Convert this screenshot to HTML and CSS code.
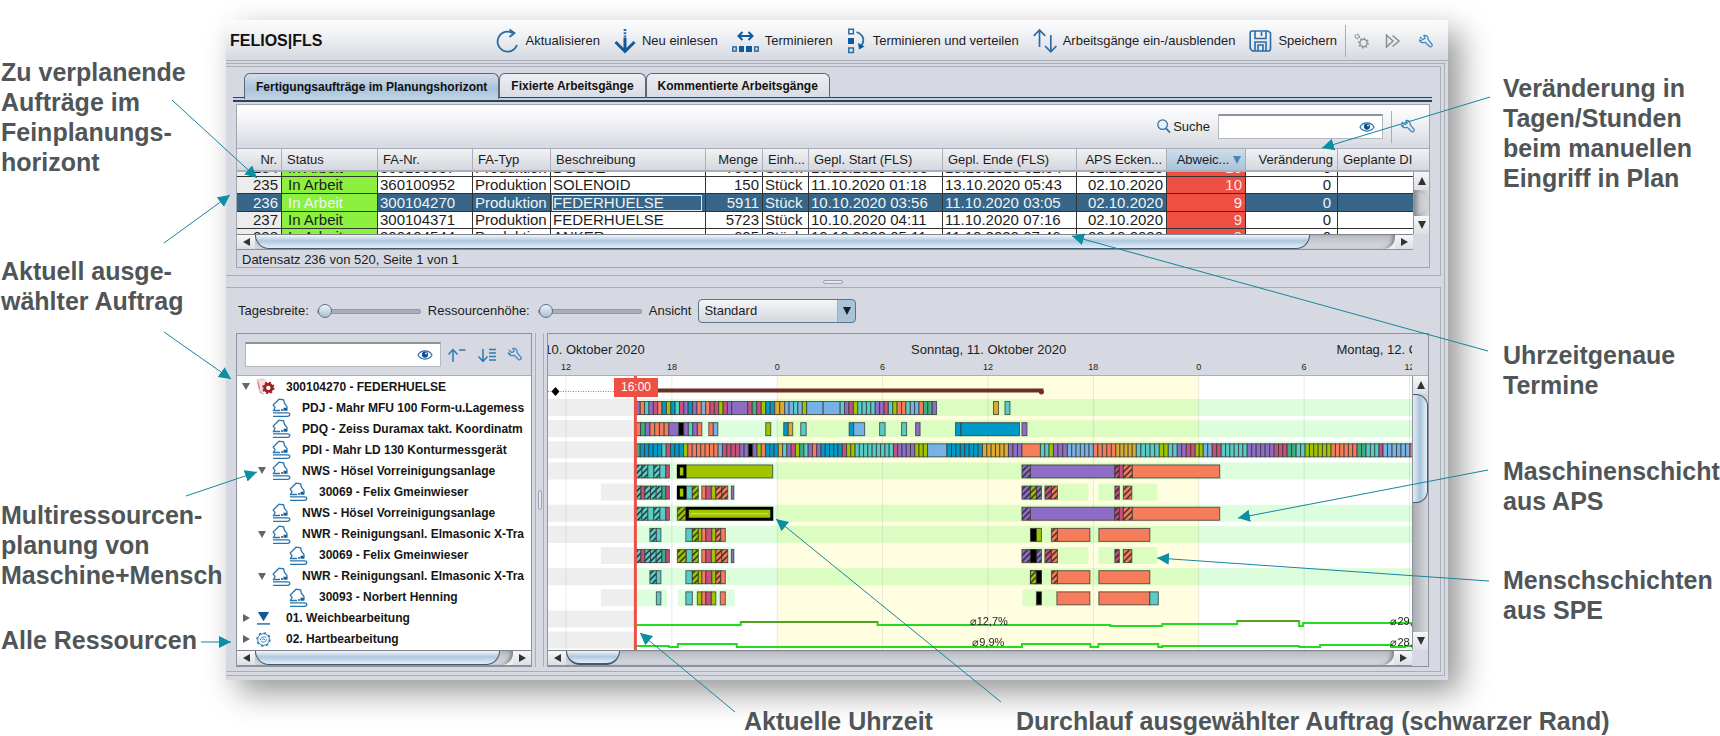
FILE: index.html
```html
<!DOCTYPE html>
<html lang="de">
<head>
<meta charset="utf-8">
<title>FELIOS|FLS</title>
<link rel="stylesheet" href="styles.css">
</head>
<body>
<svg class="defs" aria-hidden="true">
  <symbol id="i-wrench" viewBox="0 0 16 16"><path d="M2 3.2 5.2 6 7.6 4.6 6.2 1.6 C9 .8 11.4 3 10.6 5.8 L15 11.2 C15.8 12.6 14 14.4 12.6 13.6 L7.6 8.8 C5 10 2 8.8 1.4 6.2 L4.2 7.4" fill="none" stroke="currentColor" stroke-width="1.3" stroke-linejoin="round"/></symbol>
  <symbol id="i-eye" viewBox="0 0 16 12"><path d="M1 6 C4 .6 12 .6 15 6 C12 11.4 4 11.4 1 6Z" fill="#fff" stroke="#2a6ca5" stroke-width="1.2"/><circle cx="8" cy="5.6" r="3.1" fill="#0d4f8c"/><circle cx="9" cy="4.6" r="1" fill="#cfe2f2"/></symbol>
  <symbol id="i-machine" viewBox="0 0 19 19"><path d="M8 12.5 H1.5 L3 9.6 1.2 7 7 1.2 11.6 1.8 12.4 5.2 15 8.6 V12.6" fill="none" stroke="#2a74ae" stroke-width="1.3"/><path d="M11.5 9.8 H14.8 V12.8 H11.5Z M9 11.2 H11 V12.8 H9Z" fill="#0f5a9a"/><path d="M1 14.9 H15.5 C18.6 14.9 18.6 18.3 15.5 18.3 H1" fill="none" stroke="#2a74ae" stroke-width="1.2"/></symbol>
  <symbol id="i-order" viewBox="0 0 20 18"><path d="M1 2 8 1 11 4 9 13 4 15Z" fill="#f4dcdc" stroke="#dfb4b4" stroke-width=".8"/><path d="M2 4 4 12" stroke="#c66" stroke-width="1"/><g fill="none" stroke="#9e2226"><circle cx="13" cy="10.4" r="3.8" stroke-width="3"/><circle cx="13" cy="10.4" r="5.6" stroke-width="1.8" stroke-dasharray="2.3 2.1"/></g><path d="M4 15 8 17" stroke="#c77" stroke-width="1"/></symbol>
  <symbol id="i-soft" viewBox="0 0 16 16"><path d="M2 1 H14 L8 11Z" fill="#0f5a9a"/><path d="M1 13.8 H15" stroke="#0f5a9a" stroke-width="1.4"/></symbol>
  <symbol id="i-hard" viewBox="0 0 16 16"><g fill="none" stroke="#2a74ae"><circle cx="8" cy="8" r="6.2" stroke-width="1"/><circle cx="8" cy="8" r="7" stroke-width="1.4" stroke-dasharray="2.6 2.9"/><path d="M4.6 8.6 C5 5 9 4.4 11 6.2 M11.4 7.6 C11 11 7 11.6 5 9.8 M6.6 8.8 8 7 9.6 8.4" stroke-width="1"/></g></symbol>
</svg>

<div class="sheet">
  <aside class="notes notes-left">
    <p class="note order-pool">Zu verplanende<br>Aufträge im<br>Feinplanungs-<br>horizont</p>
    <p class="note current-order">Aktuell ausge-<br>wählter Auftrag</p>
    <p class="note multi">Multiressourcen-<br>planung von<br>Maschine+Mensch</p>
    <p class="note all">Alle Ressourcen</p>
  </aside>

  <div class="center">
  <main class="window">
    <header class="toolbar">
      <h1>FELIOS|FLS</h1>
      <button type="button"><svg width="24" height="26" viewBox="0 0 24 26"><path d="M22 17 A10 10 0 1 1 18 5.2" fill="none" stroke="#2a6ca5" stroke-width="1.8"/><path d="M14.5 1.5 19.5 5 14.5 9" fill="none" stroke="#2a6ca5" stroke-width="1.8"/></svg>Aktualisieren</button>
      <button type="button"><svg width="22" height="26" viewBox="0 0 22 26"><path d="M11 1 V10" stroke="#2a6ca5" stroke-width="2.6" stroke-dasharray="2 1.2"/><path d="M11 10 V23 M1.5 14 11 23.5 20.5 14" fill="none" stroke="#0f5a9a" stroke-width="3"/></svg>Neu einlesen</button>
      <button type="button"><svg width="27" height="26" viewBox="0 0 27 26"><path d="M6.5 8 H20.5 M10.5 4 6.5 8 10.5 12 M16.5 4 20.5 8 16.5 12" fill="none" stroke="#0f5a9a" stroke-width="2"/><path d="M.8 18.8 H4.2 V23.2 H.8Z M22.8 18.8 H26.2 V23.2 H22.8Z" fill="none" stroke="#0f5a9a" stroke-width="1.3"/><path d="M7 18 H12 V24 H7Z M14 18 H20 V24 H14Z" fill="#0f5a9a"/></svg>Terminieren</button>
      <button type="button"><svg width="20" height="26" viewBox="0 0 20 26"><path d="M1.8 1.2 H6.4 V5.8 H1.8Z M1.8 20 H6.4 V24.6 H1.8Z" fill="none" stroke="#2a6ca5" stroke-width="1.5"/><path d="M1 10 H7 V16 H1Z" fill="#0f5a9a"/><path d="M9.5 4 C17.5 7 18 13 13.5 19" fill="none" stroke="#2a6ca5" stroke-width="1.8"/><path d="M11 15 12 21.5 17.5 18.5Z" fill="#0f5a9a"/></svg>Terminieren und verteilen</button>
      <button type="button"><svg width="24" height="26" viewBox="0 0 24 26"><path d="M6.5 19 V2 M.8 7.8 6.5 2 12.2 7.8 M17.8 7 V23.5 M12 18 17.8 23.8 23.4 18" fill="none" stroke="#2a6ca5" stroke-width="1.7"/></svg>Arbeitsgänge ein-/ausblenden</button>
      <button type="button"><svg width="23" height="24" viewBox="0 0 23 24"><path d="M3 2 H19 L21.5 4 V19.5 Q21.5 22 19.5 22 H3.5 L1.2 19.5 V4 Q1.2 2 3 2Z M6 2 V9.5 H17 V2 M12.5 3 V7 M6 22 V13 H17 V22 M9 22 V16 H14 V22" fill="none" stroke="#2a6ca5" stroke-width="1.6"/></svg>Speichern</button>
      <span class="rule"></span>
      <button type="button" class="mini" aria-label="Prozesse"><svg width="15" height="16" viewBox="0 0 15 16" fill="none" stroke="#8a8d93"><circle cx="9.5" cy="10" r="3.6" stroke-width="1.3"/><circle cx="9.5" cy="10" r="4.8" stroke-width="1.3" stroke-dasharray="1.6 2.1"/><circle cx="3.2" cy="3.4" r="2" stroke-width="1.6" stroke-dasharray="1.3 .8"/></svg></button>
      <button type="button" class="mini" aria-label="Weiter"><svg width="16" height="14" viewBox="0 0 16 14" fill="none" stroke="#8a8d93" stroke-width="1.5"><path d="M1.5 1 V13 L8 7Z M7.5 1.5 14 7 7.5 12.5"/></svg></button>
      <button type="button" class="mini blue" aria-label="Einstellungen"><svg width="15" height="15"><use href="#i-wrench"/></svg></button>
    </header>

    <div class="frame">
      <section class="pane pane-orders">
        <nav class="tabs">
          <button type="button" class="tab active">Fertigungsaufträge im Planungshorizont</button>
          <button type="button" class="tab">Fixierte Arbeitsgänge</button>
          <button type="button" class="tab">Kommentierte Arbeitsgänge</button>
        </nav>
        <div class="orders">
          <div class="searchbar">
            <label for="suche"><svg width="14" height="15" viewBox="0 0 14 15" fill="none" stroke="#2a74ae"><circle cx="5.6" cy="5.6" r="4.8" stroke-width="1.2"/><path d="M9 9.4 13 13.6" stroke-width="1.8"/></svg>Suche</label>
            <span class="field"><input id="suche" type="text"><svg width="16" height="12"><use href="#i-eye"/></svg></span>
            <span class="rule"></span>
            <button type="button" class="mini blue" aria-label="Tabelle einstellen"><svg width="15" height="15"><use href="#i-wrench"/></svg></button>
          </div>
          <div class="grid">
            <div class="viewport" id="orders-view">
              <table>
                <colgroup><col class="c45"><col class="c96"><col class="c95"><col class="c78"><col class="c155"><col class="c57"><col class="c46"><col class="c134"><col class="c134"><col class="c90"><col class="c79"><col class="c92"><col></colgroup>
                <thead><tr><th class="r">Nr.</th><th>Status</th><th>FA-Nr.</th><th>FA-Typ</th><th>Beschreibung</th><th class="r">Menge</th><th>Einh...</th><th>Gepl. Start (FLS)</th><th>Gepl. Ende (FLS)</th><th class="r">APS Ecken...</th><th class="r sorted">Abweic... <i class="sort"></i></th><th class="r">Veränderung</th><th>Geplante DI</th></tr></thead>
                <tbody>
                  <tr><td>234</td><td>In Arbeit</td><td>360100087</td><td>Produktion</td><td>DOESE</td><td>7000</td><td>Stück</td><td>10.10.2020 03:33</td><td>13.10.2020 02:54</td><td>02.10.2020</td><td>10</td><td>0</td><td></td></tr>
                  <tr><td>235</td><td>In Arbeit</td><td>360100952</td><td>Produktion</td><td>SOLENOID</td><td>150</td><td>Stück</td><td>11.10.2020 01:18</td><td>13.10.2020 05:43</td><td>02.10.2020</td><td>10</td><td>0</td><td></td></tr>
                  <tr class="current"><td>236</td><td>In Arbeit</td><td>300104270</td><td>Produktion</td><td><span class="focus">FEDERHUELSE</span></td><td>5911</td><td>Stück</td><td>10.10.2020 03:56</td><td>11.10.2020 03:05</td><td>02.10.2020</td><td>9</td><td>0</td><td></td></tr>
                  <tr><td>237</td><td>In Arbeit</td><td>300104371</td><td>Produktion</td><td>FEDERHUELSE</td><td>5723</td><td>Stück</td><td>10.10.2020 04:11</td><td>11.10.2020 07:16</td><td>02.10.2020</td><td>9</td><td>0</td><td></td></tr>
                  <tr><td>238</td><td>In Arbeit</td><td>300104544</td><td>Produktion</td><td>ANKER</td><td>605</td><td>Stück</td><td>10.10.2020 05:11</td><td>11.10.2020 07:46</td><td>02.10.2020</td><td>9</td><td>0</td><td></td></tr>
                </tbody>
              </table>
            </div>
            <div class="vside">
              <div class="vhead"></div>
              <div class="vbar"><span class="arrow up"></span><span class="vthumb grey"></span><span class="arrow down"></span></div>
            </div>
            <div class="hbar"><span class="arrow left"></span><div class="htrack"><span class="hthumb wide"></span></div><span class="arrow right"></span></div>
            <div class="corner"></div>
          </div>
          <p class="status">Datensatz 236 von 520, Seite 1 von 1</p>
        </div>
      </section>

      <div class="split-h"><span></span></div>

      <section class="pane pane-plan">
        <div class="controls">
          <label for="tag">Tagesbreite:</label><input id="tag" type="range" min="0" max="100" value="0">
          <label for="res">Ressourcenhöhe:</label><input id="res" type="range" min="0" max="100" value="0">
          <label for="ansicht">Ansicht</label><span class="choice"><select id="ansicht"><option>Standard</option></select></span>
        </div>
        <div class="plan">
          <div class="tree-panel">
            <div class="tree-tools">
              <span class="field"><input type="text" aria-label="Ressource suchen"><svg width="16" height="12"><use href="#i-eye"/></svg></span>
              <button type="button" class="mini" aria-label="Zuklappen"><svg width="20" height="16" viewBox="0 0 20 16" fill="none" stroke="#2f7ab5" stroke-width="1.5"><path d="M6 15 V3 M1.5 7.5 6 2.5 10.5 7.5 M12 3 H18.5"/></svg></button>
              <button type="button" class="mini" aria-label="Aufklappen"><svg width="20" height="16" viewBox="0 0 20 16" fill="none" stroke="#2f7ab5" stroke-width="1.5"><path d="M6 2 V14 M1.5 9.5 6 14.5 10.5 9.5 M12 2.5 H19 M12 6 H19 M12 9.5 H19 M12 13 H19"/></svg></button>
              <button type="button" class="mini blue" aria-label="Baum einstellen"><svg width="15" height="15"><use href="#i-wrench"/></svg></button>
            </div>
            <ul class="tree">
              <li class="l0"><i class="open"></i><svg class="ic"><use href="#i-order"/></svg>300104270 - FEDERHUELSE</li>
              <li class="l1"><i></i><svg class="ic"><use href="#i-machine"/></svg>PDJ - Mahr MFU 100 Form-u.Lagemess</li>
              <li class="l1"><i></i><svg class="ic"><use href="#i-machine"/></svg>PDQ - Zeiss Duramax takt. Koordinatm</li>
              <li class="l1"><i></i><svg class="ic"><use href="#i-machine"/></svg>PDI - Mahr LD 130 Konturmessgerät</li>
              <li class="l1"><i class="open"></i><svg class="ic"><use href="#i-machine"/></svg>NWS - Hösel Vorreinigungsanlage</li>
              <li class="l2"><i></i><svg class="ic"><use href="#i-machine"/></svg>30069 - Felix Gmeinwieser</li>
              <li class="l1"><i></i><svg class="ic"><use href="#i-machine"/></svg>NWS - Hösel Vorreinigungsanlage</li>
              <li class="l1"><i class="open"></i><svg class="ic"><use href="#i-machine"/></svg>NWR - Reinigungsanl. Elmasonic X-Tra</li>
              <li class="l2"><i></i><svg class="ic"><use href="#i-machine"/></svg>30069 - Felix Gmeinwieser</li>
              <li class="l1"><i class="open"></i><svg class="ic"><use href="#i-machine"/></svg>NWR - Reinigungsanl. Elmasonic X-Tra</li>
              <li class="l2"><i></i><svg class="ic"><use href="#i-machine"/></svg>30093 - Norbert Henning</li>
              <li class="l0"><i class="shut"></i><svg class="ic small"><use href="#i-soft"/></svg>01. Weichbearbeitung</li>
              <li class="l0"><i class="shut"></i><svg class="ic small"><use href="#i-hard"/></svg>02. Hartbearbeitung</li>
            </ul>
            <div class="hbar"><span class="arrow left"></span><div class="htrack"><span class="hthumb tree-thumb"></span></div><span class="arrow right"></span></div>
          </div>

          <div class="split-v"><span></span></div>

          <div class="gantt-panel">
            <div class="scale">
              <div class="days"><span class="day d1">Samstag, 10. Oktober 2020</span><span class="day d2">Sonntag, 11. Oktober 2020</span><span class="day d3">Montag, 12. Oktober 2020</span></div>
              <div class="hours" id="hours"></div>
            </div>
            <div class="scale-end"></div>
            <div class="chart">
              <svg id="gantt" viewBox="0 0 865 274" preserveAspectRatio="none" role="img" aria-label="Plantafel"></svg>
              <span class="now">16:00</span>
              <span class="load w1">⌀12,7%</span><span class="load w2">⌀9,9%</span>
              <span class="load w3">⌀29,1%</span><span class="load w4">⌀28,4%</span>
            </div>
            <div class="vbar"><span class="arrow up"></span><span class="vthumb"></span><span class="arrow down"></span></div>
            <div class="hbar"><span class="arrow left"></span><div class="htrack"><span class="hthumb short"></span></div><span class="arrow right"></span></div>
            <div class="corner"></div>
          </div>
        </div>
      </section>
    </div>
  </main>
  <div class="captions"><p class="note">Aktuelle Uhrzeit</p><p class="note">Durchlauf ausgewählter Auftrag (schwarzer Rand)</p></div>
  </div>

  <aside class="notes notes-right">
    <p class="note change">Veränderung in<br>Tagen/Stunden<br>beim manuellen<br>Eingriff in Plan</p>
    <p class="note dates">Uhrzeitgenaue<br>Termine</p>
    <p class="note machine">Maschinenschicht<br>aus APS</p>
    <p class="note people">Menschschichten<br>aus SPE</p>
  </aside>

  <svg class="arrows" viewBox="0 0 1720 736" aria-hidden="true">
    <defs><marker id="tip" markerUnits="userSpaceOnUse" markerWidth="14" markerHeight="14" refX="12" refY="6" orient="auto"><path d="M0 0 12 6 0 12Z" fill="#0a8fa3"/></marker></defs>
    <g stroke="#17859b" stroke-width="1" marker-end="url(#tip)">
      <path d="M172 100 257 178"/><path d="M164 243 230 195"/><path d="M164 332 231 379"/><path d="M186 496 257 472"/><path d="M201 642 231 642"/>
      <path d="M1490 97 1322 148"/><path d="M1488 351 1072 236"/><path d="M1488 470 1238 518"/><path d="M1489 581 1157 558"/><path d="M1001 702 776 519"/><path d="M735 712 640 633"/>
    </g>
  </svg>
</div>
<script src="gantt.js"></script>
</body>
</html>
```

FILE: styles.css
```css
* { box-sizing: border-box; }
body { margin: 0; background: #fff; color: #1c1c1e; font: 13px/16px "Liberation Sans", Arial, sans-serif; }
h1, p, ul { margin: 0; padding: 0; }
button, input, select { font: inherit; color: inherit; }
button { border: 0; background: none; padding: 0; }
svg { display: block; flex: none; }
.defs { position: absolute; width: 0; height: 0; }

.sheet { position: relative; display: grid; grid-template-columns: 226px minmax(0, 1fr) 272px; overflow: hidden; }
.note { font-size: 25px; line-height: 30px; font-weight: 700; color: #505558; white-space: nowrap; }
.notes { position: relative; z-index: 1; }
.notes-left { padding-left: 1px; }
.notes-right { padding-left: 55px; }
.order-pool { margin-top: 57px; }
.current-order { margin-top: 79px; }
.multi { margin-top: 184px; }
.all { margin-top: 35px; }
.change { margin-top: 73px; }
.dates { margin-top: 147px; }
.machine { margin-top: 56px; }
.people { margin-top: 49px; }
.captions { position: relative; display: flex; gap: 83px; padding: 28px 0 0 518px; }
.captions .note { line-height: 27px; }
.arrows { position: absolute; top: 0; left: 0; width: 100%; height: auto; z-index: 2; pointer-events: none; }

.window { margin-top: 20px; padding-bottom: 4px; background: #d6d9e1; box-shadow: 12px 12px 30px rgba(0, 0, 0, .42); }
.toolbar { display: flex; align-items: center; gap: 14px; height: 41px; padding: 2px 14px 0 4px; background: linear-gradient(#fbfbfb, #f3f4f6 30%, #d6d9e1); border-bottom: 1px solid #a9aeb9; }
.toolbar h1 { font-size: 16px; line-height: 20px; margin-right: auto; color: #111; }
.toolbar button { display: flex; align-items: center; gap: 6px; white-space: nowrap; }
.toolbar .mini { width: 18px; justify-content: center; }
.toolbar .rule { height: 32px; margin: 0 -8px 0 -6px; }
.blue { color: #3f86c0; }
.rule { width: 1px; background: #a9aeb9; }

.frame { margin: 2px 3px 0 0; padding: 2px 3px 3px 0; border: 1px solid #a9aeb9; border-left: 0; }
.pane { border: 1px solid #a9aeb9; border-left: 0; }
.pane-orders { padding: 6px 8px 7px 7px; }

.tabs { display: flex; height: 29px; padding-left: 11px; background: linear-gradient(transparent 24px, #2f4257 24px, #2f4257 25px, #bfd3e6 25px, #bfd3e6 27px, #2f4257 27px); }
.tab { height: 25px; padding: 0 11px; font-size: 12px; font-weight: 700; color: #111; border: 1px solid #5d6877; border-bottom-color: #2f4257; border-radius: 6px 6px 0 0; background: linear-gradient(#eceef2, #d9dce3); white-space: nowrap; }
.tab.active { height: 26px; border-bottom: 0; background: linear-gradient(#d3dee9, #a9c3da 60%, #bfd3e6); }

.orders { margin: 2px 2px 0 3px; border: 1px solid #a0a5b0; }
.searchbar { display: flex; align-items: center; justify-content: flex-end; gap: 8px; height: 43px; padding: 0 14px; background: linear-gradient(#fff, #f1f2f4 40%, #d6d9e1); }
.searchbar label { display: flex; align-items: center; gap: 2px; }
.searchbar .field { width: 165px; }
.searchbar .rule { height: 32px; }
.field { display: flex; align-items: center; height: 25px; padding-right: 7px; background: #fff; border: 1px solid #b4b8c1; border-top: 2px solid #8d929c; }
.field input { flex: 1; min-width: 0; height: 100%; border: 0; background: none; padding: 0 4px; }

.grid { display: grid; grid-template-columns: minmax(0, 1fr) 16px; }
.viewport { height: 86px; overflow: hidden; background: #fff; }
.vside { display: grid; grid-template-rows: 24px 1fr; }
.vhead, th { background: linear-gradient(#f1f2f4, #d4d7de); border-top: 1px solid #a9aeb9; border-bottom: 2px solid #a9aeb9; }
table { width: 100%; table-layout: fixed; border-spacing: 0; }
th { position: sticky; top: 0; height: 24px; padding: 0 4px 0 5px; font-weight: 400; text-align: left; white-space: nowrap; overflow: hidden; border-right: 1px solid #a9aeb9; }
th:last-child { border-right: 0; padding-right: 0; }
th.r { text-align: right; }
th.sorted { background: linear-gradient(#cfdde9, #a9c3da); }
.sort { display: inline-block; border: 4px solid transparent; border-top: 8px solid #4a84b8; border-bottom: 0; }
td { height: 17px; padding: 0 3px 0 2px; font-size: 15px; line-height: 16px; white-space: nowrap; overflow: hidden; border-right: 1px solid #333; border-bottom: 1px solid #333; }
td:last-child { border-right: 0; }
td:nth-child(1), td:nth-child(6), td:nth-child(10), td:nth-child(11) { text-align: right; }
td:nth-child(12) { text-align: right; padding-right: 6px; }
td:nth-child(1) { background: #ececec; }
td:nth-child(2) { background: #8cf03e; padding-left: 6px; }
td:nth-child(11) { background: #ee5044; color: #fbe3e0; }
.current td { background: #376689; color: #eef4f8; }
.current td:nth-child(2) { background: #8cf03e; }
.current td:nth-child(11) { background: #ee5044; }
.focus { display: block; line-height: 14px; margin: 1px 0 0 -1px; border: 1px solid #dfe8ef; }
.c45 { width: 45px; } .c96 { width: 96px; } .c95 { width: 95px; } .c78 { width: 78px; } .c155 { width: 155px; } .c57 { width: 57px; } .c46 { width: 46px; } .c134 { width: 134px; } .c90 { width: 90px; } .c79 { width: 79px; } .c92 { width: 92px; }
.status { padding: 3px 0 0 5px; height: 17px; line-height: 14px; }

.hbar { display: flex; height: 16px; border-top: 1px solid #7d828c; border-bottom: 1px solid #8d929c; background: #eceef1; }
.htrack { flex: 1; background: linear-gradient(#b9bcc3, #d8dae0); border-radius: 0 0 12px 0; box-shadow: inset -4px 0 4px -2px #777; }
.hthumb { display: block; height: 14px; border: 1px solid #43586e; border-top: 0; border-radius: 0 0 14px 14px; background: linear-gradient(#f2f6fa, #b0c8de 45%, #e0f0fa); }
.hthumb.wide { width: 92.5%; }
.hthumb.tree-thumb { width: 95%; }
.hthumb.short { width: 54px; border-bottom-width: 2px; }
.arrow { display: flex; align-items: center; justify-content: center; flex: none; width: 18px; height: 100%; background: linear-gradient(#f6f7f8, #dcdfe4); }
.arrow::before { content: ""; border: 4px solid transparent; }
.arrow.left::before { border-right: 7px solid #333; border-left: 0; }
.arrow.right::before { border-left: 7px solid #333; border-right: 0; }
.arrow.up::before { border-bottom: 8px solid #333; border-top: 0; }
.arrow.down::before { border-top: 8px solid #333; border-bottom: 0; }
.arrow.up, .arrow.down { width: 100%; height: 18px; }
.vbar { display: flex; flex-direction: column; justify-content: space-between; background: linear-gradient(90deg, #a9acb1, #d8dade); border-left: 1px solid #8d929c; }
.vthumb { flex: 0 0 109px; margin-bottom: auto; border: 1px solid #43586e; border-left: 0; border-radius: 0 12px 12px 0; background: linear-gradient(90deg, #e4eef6, #a9c3da 50%, #e4f2fb); }
.vthumb.grey { flex: 0 0 26px; margin-bottom: 0; border: 0; background: linear-gradient(90deg, #bfc1c6, #d6d8dc); box-shadow: inset 3px 0 4px #8a8a8a; }
.corner { background: #d6d9e1; }

.split-h { display: flex; justify-content: center; align-items: center; height: 11px; padding-right: 2px; }
.split-h span { width: 20px; height: 4px; border: 1px solid #9ba1ad; border-radius: 3px; background: #e6e8ec; }

.pane-plan { padding: 11px 11px 4px 10px; }
.controls { display: flex; align-items: center; height: 24px; padding-left: 2px; }
.controls input[type=range] { appearance: none; width: 104px; height: 14px; margin: 0 7px 0 8px; background: none; }
.controls input[type=range]::-webkit-slider-runnable-track { height: 5px; border: 1px solid #9299a6; border-radius: 2px; background: #aab0bb; }
.controls input[type=range]::-webkit-slider-thumb { appearance: none; width: 14px; height: 14px; margin-top: -6px; border: 1px solid #5a7186; border-radius: 50%; background: linear-gradient(#eef3f7, #a9bfd2); }
.choice { position: relative; margin-left: 7px; }
.choice::after { content: ""; position: absolute; right: 5px; top: 8px; border: 4px solid transparent; border-top: 8px solid #1c1c1e; border-bottom: 0; pointer-events: none; }
select { appearance: none; display: block; width: 158px; height: 24px; padding: 0 5px; color: #1c1c1e; border: 1px solid #5d7388; border-radius: 4px; background: linear-gradient(90deg, transparent 138px, #8ba4ba 138px, #a9c3da 139px), linear-gradient(#f4f5f7, #d4d7de); }

.plan { display: grid; grid-template-columns: 296px 15px minmax(0, 1fr); margin-top: 10px; }
.tree-panel { display: flex; flex-direction: column; border: 1px solid #8d929c; min-width: 0; }
.tree-tools { display: flex; align-items: center; gap: 10px; height: 42px; padding: 0 8px; border-bottom: 1px solid #a9aeb9; }
.tree-tools .field { width: 196px; margin-right: -4px; }
.tree-tools .mini { flex: none; }
.tree { flex: 1; display: grid; grid-auto-rows: 1fr; min-height: 274px; list-style: none; background: #fff; overflow: hidden; }
.tree li { display: flex; align-items: center; font-size: 12px; font-weight: 700; white-space: nowrap; color: #161616; }
.tree i { flex: none; width: 12px; margin-right: 4px; display: flex; justify-content: center; }
.tree .open::before { content: ""; border: 4px solid transparent; border-top: 7px solid #666; border-bottom: 0; }
.tree .shut::before { content: ""; border: 4px solid transparent; border-left: 7px solid #666; border-right: 0; }
.ic { width: 19px; height: 19px; margin-right: 11px; }
.ic.small { width: 15px; height: 15px; margin-right: 15px; }
.l0 { padding-left: 3px; }
.l1 { padding-left: 19px; }
.l2 { padding-left: 36px; }

.split-v { display: flex; align-items: center; justify-content: center; margin: 0 3px; border: solid #a9aeb9; border-width: 0 1px; }
.split-v span { width: 4px; height: 20px; border: 1px solid #9ba1ad; border-radius: 3px; background: #e6e8ec; }

.gantt-panel { display: grid; grid-template-columns: minmax(0, 1fr) 16px; grid-template-rows: 42px minmax(274px, 1fr) 16px; border: 1px solid #8d929c; min-width: 0; }
.scale, .scale-end { border-bottom: 1px solid #a9aeb9; }
.scale { display: flex; flex-direction: column; justify-content: flex-end; overflow: hidden; }
.days, .hours { position: relative; height: 20px; }
.hours { height: 13px; }
.day, .hours span { position: absolute; white-space: nowrap; transform: translateX(-50%); }
.hours span { font-size: 9px; line-height: 10px; }
.d1 { left: 2%; } .d2 { left: 51%; } .d3 { left: 100%; }
.chart { position: relative; overflow: hidden; background: #fff; }
.chart svg { position: absolute; inset: 0; width: 100%; height: 100%; }
.now { position: absolute; left: 88px; top: 2px; width: 44px; margin-left: -22px; background: #ee5044; color: #fff; font-size: 12px; line-height: 19px; text-align: center; }
.load { position: absolute; font-size: 11px; line-height: 12px; color: #222; white-space: nowrap; }
.w1 { left: 48.8%; bottom: 23px; } .w2 { left: 49.1%; bottom: 2px; }
.w3 { left: 97.5%; bottom: 23px; } .w4 { left: 97.5%; bottom: 2px; }
```

FILE: gantt.js
```js
const colors = { v: '#8f6dc6', o: '#f67d5b', t: '#58ccc6', b: '#009ac8', l: '#77b1e5', g: '#a1c400', e: '#3fae84', m: '#c7507f', y: '#dcab32', k: '#000' };
const ROW = 21.15, TOP = 25;
let out = '<defs>';
for (const c in colors) out += `<pattern id="h${c}" width="6" height="6" patternUnits="userSpaceOnUse"><rect width="6" height="6" fill="${colors[c]}"/><path d="M-1 7 7-1M-4 4 4-4M2 10 10 2" stroke="#222" stroke-width="1.3"/></pattern>`;
out += '</defs><rect x="229.5" width="422" height="274" fill="#fffee0"/>';

const band = (row, a, b, fill) => { out += `<rect x="${a}" y="${TOP - 2 + ROW * (row - 1)}" width="${b - a}" height="17" fill="${fill}" style="mix-blend-mode:multiply"/>`; };
const GREY = '#eeeeee', GREEN = '#dcfedd';
[1, 2, 3, 4, 6, 7, 9, 11, 12].forEach(r => band(r, 0, 88, GREY));
[1, 2, 3, 4, 6, 7, 9].forEach(r => band(r, 88, 865, GREEN));
[5, 8, 10].forEach(r => { band(r, 53, 88, GREY); band(r, 88, 119, GREEN); band(r, 130, 187, GREEN); });
[5, 8].forEach(r => { band(r, 475, 541, GREEN); band(r, 551, 610, GREEN); });
band(10, 475, 510, GREEN);
[18, 124, 229.5, 335, 440.5, 546, 651.5, 757, 862.5].forEach(x => { out += `<path d="M${x} 0V274" stroke="#8888a0" stroke-opacity=".2"/>`; });

/* Splits the span a..b evenly over the letters; capital letters are hatched. */
const seq = (row, a, b, s) => {
  const w = (b - a) / s.length, y = TOP + .5 + ROW * (row - 1);
  [...s].forEach((c, i) => {
    const k = c.toLowerCase();
    out += `<rect x="${a + i * w}" y="${y}" width="${w}" height="13" fill="${c === k ? colors[k] : `url(#h${k})`}" stroke="#333" stroke-opacity=".75"/>`;
  });
};
const picked = (row, a, b) => {
  const y = TOP + ROW * (row - 1);
  out += `<rect x="${a + 1.5}" y="${y + 1.5}" width="${b - a - 3}" height="11" fill="#a1c400" stroke="#000" stroke-width="3"/><path d="M${a + 5} ${y + 7}H${b - 5}" stroke="#d8e85a"/>`;
};

/* Each list holds start, end and the colour letters of one run of operations. */
const plan = {
  1: [[88, 184, 'votvmobgbtmvbvolommgmv'], [184, 200, 'v'], [200, 227, 'memgbb'], [227, 237, 'yy'], [237, 259, 'lltlg'], [259, 275.5, 'l'], [275.5, 292.5, 'l'], [292.5, 389, 'tvmgttttvvmtgootlloeev'], [446, 451, 'y'], [457.5, 462.5, 't']],
  2: [[88, 121, 'oevoooo'], [121, 131, 'v'], [131, 136, 'k'], [136, 154, 'vtvo'], [161, 170, 'ol'], [218, 223, 'g'], [236, 245, 'by'], [253, 258.5, 't'], [301.5, 306, 'b'], [306, 317, 'l'], [332, 337.5, 't'], [354, 359, 't'], [368, 372.5, 'v'], [408, 413.5, 'b'], [413.5, 472, 'b'], [474.5, 479.5, 'v']],
  3: [[88, 205, 'ebbbbbtmbbbgooooooolmmmmvvk'], [205, 380, 'vgobbbytvmgetvovbbbbbmggtttttttttmvvvvggg'], [380, 399.5, 'l'], [399.5, 435, 'bbbbbbbb'], [435, 461, 'yyyyyy'], [461, 474.5, 'vvv'], [474.5, 493, 'o'], [493, 506, 'ttg'], [506, 520, 'vvv'], [520, 546, 'llllll'], [546, 568.5, 'ooooo'], [568.5, 589, 'yyyyy'], [589, 612, 'ttttt'], [612, 621, 'gg'], [621, 630, 'tt'], [630, 639, 'vv'], [639, 648, 'mm'], [648, 656, 'gg'], [656, 665, 'll'], [665, 674, 'mm'], [674, 700, 'tttttt'], [700, 727, 'vvvvvv'], [727, 740, 'mmm'], [740, 749, 'ee'], [749, 758, 'tt'], [758, 784, 'gggggg'], [784, 810, 'oooooo'], [810, 819, 'ee'], [819, 832, 'ttt'], [832, 836, 'm'], [836, 863, 'llllll'], [863, 867, 'o']],
  4: [[88, 118, 'TTtTt'], [118, 121.5, 'm'], [138, 225, 'g']],
  5: [[88, 93, 'T'], [93, 97, 'm'], [97, 114, 'TTT'], [114, 118, 'e'], [118, 121.5, 'm'], [138.5, 144.5, 't'], [144.5, 150.5, 'G'], [154, 158, 'o'], [158, 163.5, 'm'], [163.5, 168, 'g'], [168, 180, 'OO'], [183.5, 186, 'v'], [474.5, 483, 'V'], [483, 489, 'G'], [489, 494, 'V'], [497.5, 504, 'M'], [504, 510, 'O'], [567.5, 572, 'M'], [576, 584.5, 'O']],
  6: [[88, 118, 'TTtTt'], [118, 121.5, 'm'], [129.5, 138, 'G']],
  7: [[102, 108.5, 'T'], [108.5, 113, 't'], [138, 144.5, 't'], [144.5, 150.5, 'G'], [150.5, 154, 'g'], [154, 158, 'o'], [158, 164, 'm'], [164, 168, 'g'], [168, 173, 'O'], [173, 177.5, 'o'], [483, 489, 'k'], [489, 494, 'g'], [504, 510, 'O'], [510, 542.5, 'o'], [551.5, 602.5, 'o']],
  10: [[108.5, 113, 't'], [138, 144.5, 't'], [149.5, 154, 'g'], [154, 158, 'o'], [158, 163.5, 'm'], [163.5, 168, 'g'], [172.5, 177.5, 'o'], [489, 494, 'k'], [509.5, 542.5, 'o'], [551.5, 602.5, 'o'], [602.5, 611, 't']]
};
const late = [[474.5, 483, 'V'], [483, 567.5, 'v'], [567.5, 572, 'M'], [572, 576, 'm'], [576, 585, 'O'], [585, 672.5, 'o']];
plan[4].push(...late);
plan[6].push(...late);
plan[8] = [...plan[5], [129.5, 138, 'G'], [483, 489, 'k']];
plan[9] = [...plan[7], [483, 489, 'G'], [489, 494, 'k']];
for (const r in plan) plan[r].forEach(([a, b, s]) => seq(+r, a, b, s));
picked(4, 129, 138.5);
picked(5, 129, 138.5);
picked(6, 138, 225.5);

const step = (pts, fillTop) => {
  let d = `M86 ${pts[0][1]}`;
  pts.forEach(([x, y], i) => { d += `V${y}H${pts[i + 1] ? pts[i + 1][0] : 865}`; });
  out += `<path d="${d}" fill="none" stroke="#22dc22" stroke-width="2"/>`;
  pts.forEach(([x, y], i) => { if (y < fillTop) out += `<path d="M${x} ${y}H${pts[i + 1] ? pts[i + 1][0] : 865}" stroke="#4fa41c" stroke-width="2"/>`; });
};
step([[86, 249], [193, 246], [330, 249], [563, 250], [615, 248], [690, 245], [752, 250], [756, 247]], 247);
step([[86, 270], [121, 271], [130, 268], [189, 271], [474.5, 268], [543, 271], [551, 268], [611, 271], [615, 270], [752, 271], [773, 269], [844, 271], [858, 270]], 266);

out += '<path d="M0 15.5H88" stroke="#888" stroke-dasharray="1 1.5"/><path d="M7.5 11 11.5 15.5 7.5 20 3.5 15.5Z"/><path d="M108 14.5H496" stroke="#6b2f27" stroke-width="4"/><circle cx="494" cy="16" r="2.5" fill="#7a2622"/>';
out += '<path d="M87.5 0V274" stroke="#ec5148" stroke-width="3"/>';
document.getElementById('gantt').innerHTML = out;

document.getElementById('hours').innerHTML = [[18, 12], [124, 18], [229.5, 0], [335, 6], [440.5, 12], [546, 18], [651.5, 0], [757, 6], [862.5, 12]]
  .map(([x, h]) => `<span style="left:${(x / 8.65).toFixed(2)}%">${h}</span>`).join('');
document.getElementById('orders-view').scrollTop = 12;
```
